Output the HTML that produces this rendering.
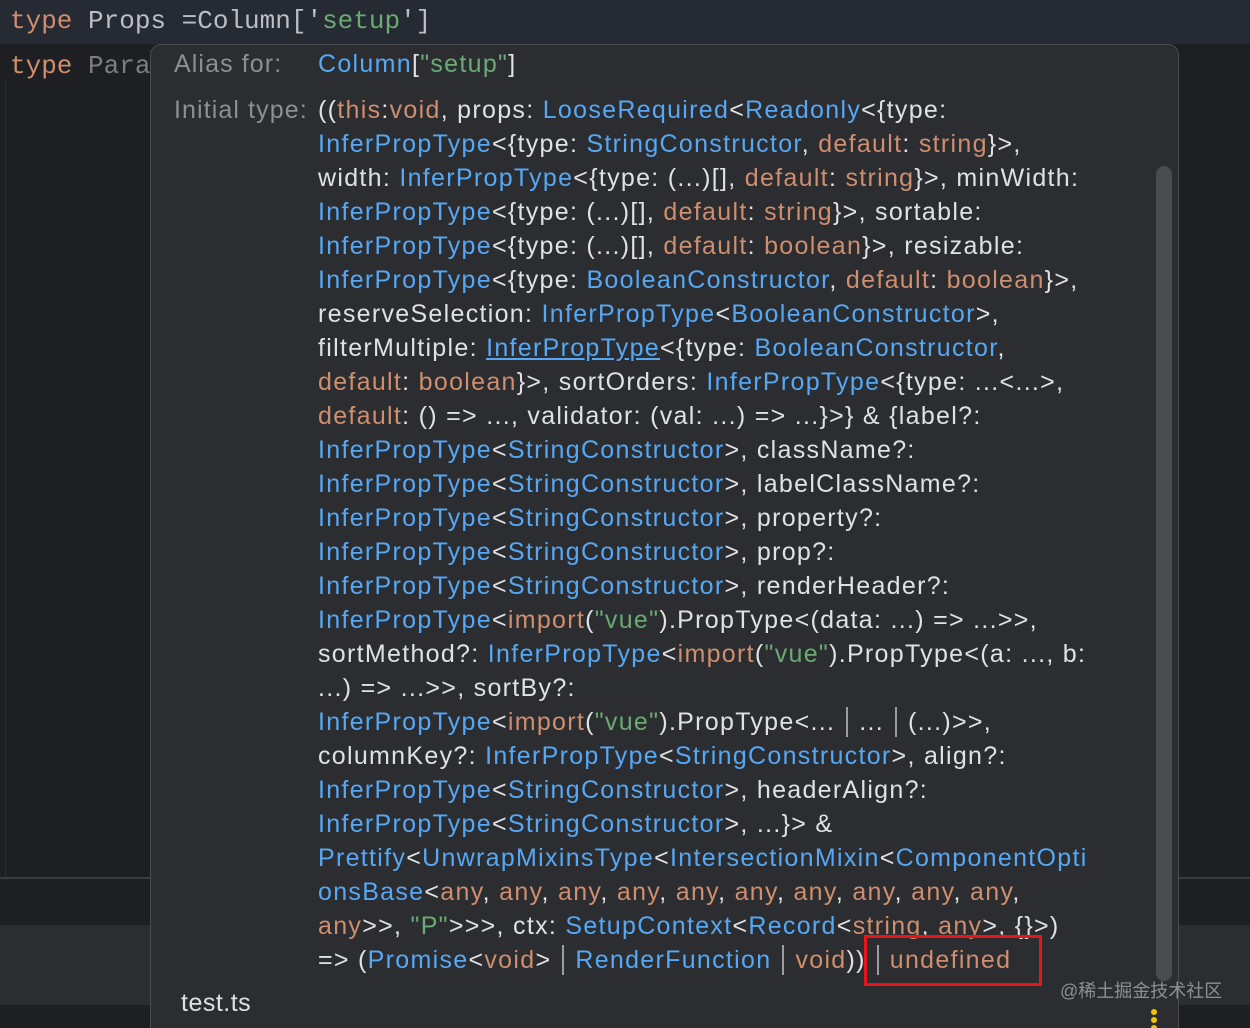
<!DOCTYPE html>
<html><head><meta charset="utf-8"><style>
*{margin:0;padding:0;box-sizing:border-box}
html,body{width:1250px;height:1028px;overflow:hidden}
body{background:#1e1f22;position:relative;font-family:"Liberation Sans",sans-serif}
.code{position:absolute;font-family:"Liberation Mono",monospace;font-size:26px;color:#bcbec4;white-space:pre}
.k{color:#cf8e6d}.s{color:#6aab73}
.pop{position:absolute;left:150px;top:44px;width:1029px;height:1000px;background:#2b2d30;border:1.5px solid #4b4d52;border-radius:11px 11px 0 0}
.l{position:absolute;left:318px;font-size:25px;line-height:34px;height:34px;color:#dfe1e5;white-space:nowrap;letter-spacing:1.3px}
.lab{position:absolute;left:174px;font-size:25px;line-height:34px;color:#8c8f94;white-space:nowrap;letter-spacing:1.1px}
.b{color:#56a8f5}.o{color:#cf8e6d}.g{color:#6aab73}.u{text-decoration:underline}
.bar{display:inline-block;width:2px;height:30px;background:#9a9ca1;vertical-align:-7px;margin:0 11px}
</style></head><body>
<div style="position:absolute;left:0;top:0;width:1250px;height:44px;background:#262a33"></div>
<div class="code" style="left:10px;top:6px"><span class="k">type</span> Props =Column['<span class="s">setup</span>']</div>
<div class="code" style="left:10px;top:51px"><span class="k">type</span> <span style="color:#7a7e85">Para</span></div>
<div style="position:absolute;left:5px;top:80px;width:1px;height:797px;background:#2b2d30"></div>
<div style="position:absolute;left:0;top:877px;width:150px;height:2px;background:#393b40"></div>
<div style="position:absolute;left:0;top:925px;width:150px;height:80px;background:#2b2d30"></div>
<div style="position:absolute;left:1179px;top:877px;width:71px;height:2px;background:#393b40"></div>
<div style="position:absolute;left:1179px;top:925px;width:71px;height:80px;background:#2b2d30"></div>
<div class="pop"></div>
<div style="position:absolute;left:1156px;top:166px;width:16px;height:815px;background:#4a4b4e;border-radius:8px"></div>
<div class="lab" style="top:47px">Alias for:</div>
<div class="l" style="top:47px"><span class="b">Column</span>[<span class="g">"setup"</span>]</div>
<div class="lab" style="top:93px">Initial type:</div>
<div class="l" style="top:93px">((<span class="o">this</span>:<span class="o">void</span>, props: <span class="b">LooseRequired</span>&lt;<span class="b">Readonly</span>&lt;{type:</div>
<div class="l" style="top:127px"><span class="b">InferPropType</span>&lt;{type: <span class="b">StringConstructor</span>, <span class="o">default</span>: <span class="o">string</span>}&gt;,</div>
<div class="l" style="top:161px">width: <span class="b">InferPropType</span>&lt;{type: (...)[], <span class="o">default</span>: <span class="o">string</span>}&gt;, minWidth:</div>
<div class="l" style="top:195px"><span class="b">InferPropType</span>&lt;{type: (...)[], <span class="o">default</span>: <span class="o">string</span>}&gt;, sortable:</div>
<div class="l" style="top:229px"><span class="b">InferPropType</span>&lt;{type: (...)[], <span class="o">default</span>: <span class="o">boolean</span>}&gt;, resizable:</div>
<div class="l" style="top:263px"><span class="b">InferPropType</span>&lt;{type: <span class="b">BooleanConstructor</span>, <span class="o">default</span>: <span class="o">boolean</span>}&gt;,</div>
<div class="l" style="top:297px">reserveSelection: <span class="b">InferPropType</span>&lt;<span class="b">BooleanConstructor</span>&gt;,</div>
<div class="l" style="top:331px">filterMultiple: <span class="b u">InferPropType</span>&lt;{type: <span class="b">BooleanConstructor</span>,</div>
<div class="l" style="top:365px"><span class="o">default</span>: <span class="o">boolean</span>}&gt;, sortOrders: <span class="b">InferPropType</span>&lt;{type: ...&lt;...&gt;,</div>
<div class="l" style="top:399px"><span class="o">default</span>: () =&gt; ..., validator: (val: ...) =&gt; ...}&gt;} &amp; {label?:</div>
<div class="l" style="top:433px"><span class="b">InferPropType</span>&lt;<span class="b">StringConstructor</span>&gt;, className?:</div>
<div class="l" style="top:467px"><span class="b">InferPropType</span>&lt;<span class="b">StringConstructor</span>&gt;, labelClassName?:</div>
<div class="l" style="top:501px"><span class="b">InferPropType</span>&lt;<span class="b">StringConstructor</span>&gt;, property?:</div>
<div class="l" style="top:535px"><span class="b">InferPropType</span>&lt;<span class="b">StringConstructor</span>&gt;, prop?:</div>
<div class="l" style="top:569px"><span class="b">InferPropType</span>&lt;<span class="b">StringConstructor</span>&gt;, renderHeader?:</div>
<div class="l" style="top:603px"><span class="b">InferPropType</span>&lt;<span class="o">import</span>(<span class="g">"vue"</span>).PropType&lt;(data: ...) =&gt; ...&gt;&gt;,</div>
<div class="l" style="top:637px">sortMethod?: <span class="b">InferPropType</span>&lt;<span class="o">import</span>(<span class="g">"vue"</span>).PropType&lt;(a: ..., b:</div>
<div class="l" style="top:671px">...) =&gt; ...&gt;&gt;, sortBy?:</div>
<div class="l" style="top:705px"><span class="b">InferPropType</span>&lt;<span class="o">import</span>(<span class="g">"vue"</span>).PropType&lt;...<span class="bar"></span>...<span class="bar"></span>(...)&gt;&gt;,</div>
<div class="l" style="top:739px">columnKey?: <span class="b">InferPropType</span>&lt;<span class="b">StringConstructor</span>&gt;, align?:</div>
<div class="l" style="top:773px"><span class="b">InferPropType</span>&lt;<span class="b">StringConstructor</span>&gt;, headerAlign?:</div>
<div class="l" style="top:807px"><span class="b">InferPropType</span>&lt;<span class="b">StringConstructor</span>&gt;, ...}&gt; &amp;</div>
<div class="l" style="top:841px"><span class="b">Prettify</span>&lt;<span class="b">UnwrapMixinsType</span>&lt;<span class="b">IntersectionMixin</span>&lt;<span class="b">ComponentOpti</span></div>
<div class="l" style="top:875px"><span class="b">onsBase</span>&lt;<span class="o">any</span>, <span class="o">any</span>, <span class="o">any</span>, <span class="o">any</span>, <span class="o">any</span>, <span class="o">any</span>, <span class="o">any</span>, <span class="o">any</span>, <span class="o">any</span>, <span class="o">any</span>,</div>
<div class="l" style="top:909px"><span class="o">any</span>&gt;&gt;, <span class="g">"P"</span>&gt;&gt;&gt;, ctx: <span class="b">SetupContext</span>&lt;<span class="b">Record</span>&lt;<span class="o">string</span>, <span class="o">any</span>&gt;, {}&gt;)</div>
<div class="l" style="top:943px">=&gt; (<span class="b">Promise</span>&lt;<span class="o">void</span>&gt;<span class="bar"></span><span class="b">RenderFunction</span><span class="bar"></span><span class="o">void</span>))<span class="bar"></span><span class="o">undefined</span></div>
<div style="position:absolute;left:864px;top:935px;width:178px;height:51px;border:3px solid #e8141b"></div>
<div style="position:absolute;left:181px;top:986px;font-size:25px;line-height:34px;color:#dfe1e5;letter-spacing:0.5px">test.ts</div>
<div style="position:absolute;left:1060px;top:977px;font-size:18px;color:#8d8f93;font-family:'Liberation Sans','Noto Sans CJK SC',sans-serif">@稀土掘金技术社区</div>
<div style="position:absolute;left:1151px;top:1009px;width:6px;height:6px;border-radius:3px;background:#f2c400"></div>
<div style="position:absolute;left:1151px;top:1017px;width:6px;height:6px;border-radius:3px;background:#f2c400"></div>
<div style="position:absolute;left:1151px;top:1025px;width:6px;height:6px;border-radius:3px;background:#f2c400"></div>
</body></html>
